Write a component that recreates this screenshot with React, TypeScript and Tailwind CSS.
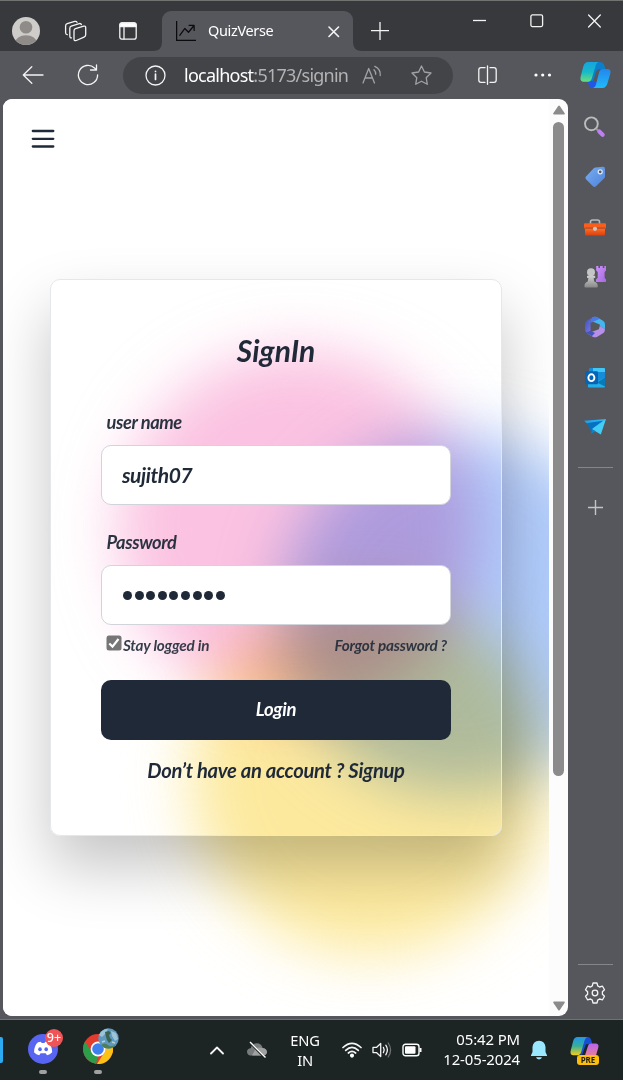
import React from "react";

const line = { fill: "none", stroke: "#f4f4f4", strokeWidth: 1.3, strokeLinecap: "round" as const, strokeLinejoin: "round" as const };

function TabStrip() {
  return (
    <div className="relative flex h-[51px] shrink-0 items-start border-t border-[#70736f] bg-[#38393c]">
      <svg className="ml-[12px] mt-[16px] shrink-0" width="28" height="28" viewBox="0 0 28 28">
        <clipPath id="avatar"><circle cx="14" cy="14" r="14" /></clipPath>
        <g clipPath="url(#avatar)">
          <rect width="28" height="28" fill="#cfcdca" />
          <circle cx="14" cy="10.3" r="6.3" fill="#8f8b88" />
          <ellipse cx="14" cy="26" rx="11" ry="7.8" fill="#8f8b88" />
        </g>
      </svg>
      <svg className="ml-[24px] mt-[19px] shrink-0" width="24" height="23" viewBox="0 0 24 23" {...line}>
        <path d="M11.5 8.7 19.7 6.2Q21.7 5.7 21.7 7.7V14.8Q21.7 16.5 20 17.2L12.3 20.5Q10 21.3 10 19V11Q10 9.2 11.5 8.7Z" />
        <path d="M7.5 17.8Q5.8 18 5.8 16V8.4Q5.8 6.6 7.3 6.1L15.2 3.6Q17 3.2 17.4 4.6" />
        <path d="M3.3 14.7Q1.6 14.6 1.6 12.8V6Q1.6 4.2 3.2 3.7L10.7 1.4Q12.4 1 13 2.3" />
      </svg>
      <svg className="ml-[31px] mt-[21px] shrink-0" width="18" height="18" viewBox="0 0 18 18" {...line}>
        <rect x="0.8" y="0.8" width="16.4" height="16.4" rx="2.3" />
        <path d="M1 3Q1 1 3 1H15Q17 1 17 3V4.7H1Z" fill="#fff" />
        <path d="M5 5V17" />
      </svg>
      <div className="relative ml-[25px] mt-[10px] flex h-[40px] w-[191px] shrink-0 rounded-t-[9px] bg-[#56575c]">
        <svg className="absolute -left-[9px] bottom-0" width="9" height="9"><path d="M9 0V9H0Q9 9 9 0Z" fill="#56575c" /></svg>
        <svg className="absolute -right-[9px] bottom-0" width="9" height="9"><path d="M0 0V9H9Q0 9 0 0Z" fill="#56575c" /></svg>
        <svg className="ml-[14px] mt-[10px] shrink-0" width="20" height="20" viewBox="0 0 16 16" fill="#0b0b0d">
          <path fillRule="evenodd" d="M0 0h1v15h15v1H0zm10 3.5a.5.5 0 0 1 .5-.5h4a.5.5 0 0 1 .5.5v4a.5.5 0 0 1-1 0V4.9l-3.613 4.417a.5.5 0 0 1-.74.037L7.06 6.767l-3.656 5.027a.5.5 0 0 1-.808-.588l4-5.5a.5.5 0 0 1 .758-.06l2.609 2.61L13.445 4H10.5a.5.5 0 0 1-.5-.5" />
        </svg>
        <span className="ml-[12px] mt-[9px] w-[70px] whitespace-nowrap text-[14.5px] leading-[20px] tracking-[-0.35px] text-white">QuizVerse</span>
        <svg className="ml-[50px] mt-[15px] shrink-0" width="12" height="12" {...line} strokeWidth="1.6"><path d="M1 1 10.5 10.5M10.5 1 1 10.5" /></svg>
      </div>
      <svg className="ml-[18px] mt-[21px] shrink-0" width="18" height="18" {...line} strokeLinecap="butt"><path d="M0 8.7H18M9 0V18" /></svg>
      <div className="ml-auto mr-[21px] mt-[13px] flex">
        <svg width="13" height="14" {...line} strokeLinecap="butt"><path d="M0 6.5H13" /></svg>
        <svg className="ml-[44px]" width="14" height="14" {...line}><rect x="0.9" y="0.9" width="11.7" height="11.7" rx="1.5" /></svg>
        <svg className="ml-[44px]" width="14" height="14" {...line}><path d="M.6 1 12.3 13M12.3 1 .6 13" /></svg>
      </div>
    </div>
  );
}

function CopilotMark() {
  return (
    <svg className="shrink-0" width="31" height="28" viewBox="0 0 31 28">
      <defs>
        <linearGradient id="cpA" x1="0" y1="0" x2="0" y2="1"><stop stopColor="#16a4df" /><stop offset=".5" stopColor="#14bac9" /><stop offset="1" stopColor="#6ddc7d" /></linearGradient>
        <linearGradient id="cpB" x1="0" y1="0" x2="0" y2="1"><stop stopColor="#2486ed" /><stop offset="1" stopColor="#20baf7" /></linearGradient>
      </defs>
      <path d="M7 1H19.5Q23 1 24.2 4L25.5 8H20Q17 8 16 11L13 20.5H7Z" fill="#0b7fcb" />
      <path d="M7.5 20.5H18L16 27H12Q10 27 9 24.5Z" fill="#2057e7" />
      <path d="M8.3 1H19Q16.8 1 15.5 5L12 17Q11 20.7 8 20.7H3.5Q-.5 20.7.7 15.5L3.3 5.5Q4.5 1 8.3 1Z" fill="url(#cpA)" />
      <path d="M22.5 8H27.5Q31.5 8 30.2 13L27.4 22.6Q26 27 22.5 27H12.5Q15 27 16.2 22.7L19 11.5Q20 8 22.5 8Z" fill="url(#cpB)" />
    </svg>
  );
}

function Toolbar() {
  return (
    <div className="flex h-[48px] shrink-0 items-center bg-[#56575c]">
      <svg className="ml-[22px] shrink-0" width="22" height="20" {...line}><path d="M21 10H1.5M9.8 1.8 1.3 10 9.8 18.2" /></svg>
      <svg className="ml-[33px] shrink-0" width="22" height="22" {...line}><path d="M20.6 11A9.6 9.6 0 1 1 17.5 3.9L19.5 6M19.5 1V6H13.5" /></svg>
      <div className="ml-[24px] flex h-[37px] w-[330px] shrink-0 items-center rounded-full bg-[#434448]">
        <svg className="ml-[22px] shrink-0" width="21" height="21" {...line}><circle cx="10.5" cy="10.5" r="9.5" /><path d="M10.5 9V14.5M10.5 6.3V6.5" strokeWidth="1.7" /></svg>
        <span className="ml-[18px] w-[165px] whitespace-nowrap text-[18px] leading-[24px] tracking-[-0.75px] text-[#b3b3b4]"><span className="text-white">localhost</span>:5173/signin</span>
        <svg className="ml-[13px] shrink-0" width="21" height="20" {...line} stroke="#a1a2a4"><path d="M1 18 6.7 3.5 12.5 18M3 13H10.5M12 4.7Q13.8 6.5 13.7 9.3M12.8 1.4Q19 4.5 18.2 10.5" /></svg>
        <svg className="ml-[28px] shrink-0" width="21" height="21" viewBox="0 0 21 21" {...line} stroke="#a1a2a4"><path d="M10.5 1 13.4 7 20 8 15.2 12.7 16.3 19.3 10.5 16.2 4.7 19.3 5.8 12.7 1 8 7.6 7Z" /></svg>
      </div>
      <svg className="ml-[25px] shrink-0" width="19" height="20" {...line}><path d="M7 2.7H3Q.8 2.7.8 5V15Q.8 17.3 3 17.3H7M12 2.7H16Q18.2 2.7 18.2 5V15Q18.2 17.3 16 17.3H12M9.5 .8V19.3" /></svg>
      <svg className="ml-[37px] shrink-0" width="18" height="4" fill="#fff"><circle cx="2" cy="2" r="1.6" /><circle cx="8.7" cy="2" r="1.6" /><circle cx="15.5" cy="2" r="1.6" /></svg>
      <div className="ml-[28px]"><CopilotMark /></div>
    </div>
  );
}

function Field({ label, children }: { label: string; children: React.ReactNode }) {
  return (
    <div className="flex flex-col">
      <span className="pl-[5.5px] text-[18.3px] font-bold italic leading-[24px] tracking-[-0.43px] text-[#1f2937]/95">{label}</span>
      <div className="mt-[11px] flex h-[60px] items-center rounded-[10px] border border-[#d1d5db] bg-white pl-[20px] text-[21px] font-bold italic tracking-[-0.4px]">{children}</div>
    </div>
  );
}

function SignInPage() {
  return (
    <div className="relative flex h-[917px] w-[546px] shrink-0 flex-col overflow-hidden bg-white font-['Lato',sans-serif] text-[#1f2937]">
      <div className="absolute left-[115px] top-[251px] size-[360px] rounded-full bg-[#f9a8d4] opacity-70 mix-blend-multiply blur-[30px]" />
      <div className="absolute left-[277px] top-[334px] size-[360px] rounded-full bg-[#8fb6f9] opacity-70 mix-blend-multiply blur-[30px]" />
      <div className="absolute left-[187px] top-[496px] size-[360px] rounded-full bg-[#fbe074] opacity-70 mix-blend-multiply blur-[30px]" />
      <svg className="relative ml-[28px] mt-[30px] shrink-0" width="24" height="20" stroke="#1f2937" strokeWidth="2.3" strokeLinecap="round"><path d="M1.8 2H22.3M1.8 9.8H22.3M1.8 17.5H22.3" /></svg>
      <div className="relative ml-[47px] mt-[130px] flex h-[557px] w-[452px] flex-col rounded-[10px] border border-[#e5e7eb] px-[50px] shadow-[0_31px_62px_rgba(0,0,0,0.23)]">
        <h1 className="mt-[50px] text-center text-[30px] font-bold italic leading-[40px]">SignIn</h1>
        <div className="mt-[40px]"><Field label="user name">sujith07</Field></div>
        <div className="mt-[25px]">
          <Field label="Password">
            <span className="ml-[1px] mt-[1px] flex gap-[2.6px]">
              {Array.from({ length: 9 }, (_, i) => <i key={i} className="size-[9px] rounded-full bg-[#1f2937]" />)}
            </span>
          </Field>
        </div>
        <div className="mt-[8px] flex h-[24px] items-center justify-between pl-[5px] pr-[4px] text-[15.3px] font-bold italic tracking-[-0.22px] text-[#1f2937]/90">
          <span className="flex items-center">
            <svg className="mb-[5px] mr-[1px]" width="16" height="16"><rect x=".5" y=".5" width="15" height="15" rx="2.5" fill="#767676" /><path d="M3.3 8.5 6.5 11.6 12.5 4" fill="none" stroke="#fff" strokeWidth="2.2" /></svg>
            <span>Stay logged in</span>
          </span>
          <span>Forgot password ?</span>
        </div>
        <div className="mt-[23px] flex h-[60px] items-center justify-center rounded-[10px] bg-[#1f2937] pb-[1px] text-[18.5px] font-bold italic tracking-[-0.3px] text-white">Login</div>
        <div className="mt-[16px] text-center text-[20.2px] font-bold italic leading-[28px] tracking-[-0.3px]">Don’t have an account ? Signup</div>
      </div>
    </div>
  );
}

function Sidebar() {
  return (
    <aside className="flex w-[55px] shrink-0 flex-col items-center bg-[#56575c] pr-px">
      <svg width="0" height="0" className="absolute">
        <defs>
          <linearGradient id="sBlue" x1="0" y1="0" x2="1" y2="1"><stop stopColor="#7aaeef" /><stop offset="1" stopColor="#4d82dc" /></linearGradient>
          <linearGradient id="sOrange" x1="0" y1="0" x2="0" y2="1"><stop stopColor="#fb6f25" /><stop offset="1" stopColor="#dd3e0d" /></linearGradient>
          <linearGradient id="sGrey" x1="0" y1="0" x2="0" y2="1"><stop stopColor="#cfcfcf" /><stop offset="1" stopColor="#898989" /></linearGradient>
          <linearGradient id="sPurple" x1="0" y1="0" x2="1" y2="1"><stop stopColor="#ce91fd" /><stop offset="1" stopColor="#a56ae0" /></linearGradient>
          <linearGradient id="sCyan" x1="0" y1="0" x2="1" y2="1"><stop stopColor="#1598e6" /><stop offset="1" stopColor="#4cd8fb" /></linearGradient>
          <linearGradient id="sIndigo" x1="0" y1="0" x2="1" y2="1"><stop stopColor="#3754ba" /><stop offset="1" stopColor="#8a78ed" /></linearGradient>
        </defs>
      </svg>
      <div className="mt-[3px] flex flex-col [&>svg]:my-[14px] [&>svg]:size-[22px]">
        <svg viewBox="0 0 22 22"><circle cx="7.4" cy="7.8" r="6.4" fill="none" stroke="#bcbcbc" strokeWidth="1.9" /><path d="M12.3 12.7 14 14.4" stroke="#999" strokeWidth="2" /><path d="M15.3 15.5 18.6 18.7" stroke="#bd80ee" strokeWidth="4.2" strokeLinecap="round" /></svg>
        <svg viewBox="0 0 22 22"><path d="M11.5 1.4 19 .8Q21 .8 21 3V10.5Q21 11.5 20 12.5L12 20.3Q10.5 21.5 9 20.2L2 13.2Q.7 11.8 2 10.5L10 2Q10.8 1.5 11.5 1.4Z" fill="url(#sBlue)" /><circle cx="16.2" cy="5.8" r="2" fill="#56575c" stroke="#d9e7fb" strokeWidth="1.3" /></svg>
        <svg viewBox="0 -1 22 22"><path d="M6.5 7V4.7Q6.5 3 8.5 3H13.5Q15.5 3 15.5 4.7V7" fill="none" stroke="#b9b9b9" strokeWidth="1.6" /><path d="M0 7Q0 6.3 1 6.3H21Q22 6.3 22 7V11.5H0Z" fill="#f95f1b" /><path d="M1 11.5H21V17Q21 18.5 19.5 18.5H2.5Q1 18.5 1 17Z" fill="url(#sOrange)" /><path d="M.5 11H21.5" stroke="#b93a14" strokeWidth=".8" /><circle cx="11" cy="11.8" r="2.1" fill="#c8c8c8" /></svg>
        <svg viewBox="0 0 22 22"><path d="M12.2 0H14.4V2H16V0H18.8V2H20.3V0H22V4.4L20.6 6V11.8L22 13.5V16H12V13.5L13.7 11.8V6L12.2 4.4Z" fill="url(#sPurple)" /><circle cx="7" cy="6.2" r="4" fill="#c5c5c5" /><path d="M3 9.7H11.2V12H9.7L10.2 15.4Q13.7 16.8 13.7 19.5V20.5Q13.7 21.5 12.7 21.5H1.5Q.5 21.5.5 20.5V19.5Q.5 16.8 3.7 15.4L4.4 12H3Z" fill="url(#sGrey)" /></svg>
        <svg viewBox="0 0 22 22"><path d="M8.5 1.3Q11 .2 13.5 1.5L19 4.7Q21 6 21 8.5V13L15.8 10V8.6L8.5 5.6Z" fill="#41b7ee" /><path d="M8.8 1.2Q5.8 3.3 6.5 7.8V15L2.4 16.8Q1 15.5 1 13V8Q1 5.8 2.8 4.7Z" fill="url(#sIndigo)" /><path d="M8.8 1.2Q6 3.3 6.3 7L15.8 2.8 13.4 1.4Q11 .1 8.8 1.2Z" fill="#4c77e4" /><path d="M3.2 17.4 14.8 13.3 15.8 10 21 13Q21 16 19 17.3L13.3 20.7Q11 22 8.7 20.7Z" fill="#b78ee8" /><path d="M2.4 16.8 6.5 14.7 11 17.1 7.8 20.2Z" fill="#4355bd" /></svg>
        <svg viewBox="0 -1 22 22"><rect x="5" y="1" width="16" height="16" rx="1.2" fill="#168bd7" /><path d="M9 1H20Q21 1 21 2V5H9Z" fill="#40c5f7" /><path d="M4 20V14L12 15 21 10.5V19.5Q21 20.5 20 20.5H4.8Z" fill="#25afe9" /><path d="M13 15.5 21 10.5V19.5Z" fill="#087ab9" /><rect x="1" y="4.2" width="13" height="13" rx="1.2" fill="#0763b3" /><ellipse cx="7.4" cy="10.7" rx="3" ry="3.4" fill="none" stroke="#fff" strokeWidth="1.9" /></svg>
        <svg viewBox="0 0 22 22"><path d="M0 4.7 22 3 9 13.3 5.5 9.6Z" fill="url(#sCyan)" /><path d="M3 7 19 4.7 8 13V17L4.8 11Z" fill="#0870c1" /><path d="M22 3 16.8 18.4 8 13.2Z" fill="#42cdf8" /><path d="M8 13.2 11.5 15.1 7 18Z" fill="#0d83cb" /></svg>
      </div>
      <div className="mt-[15px] h-px w-[35px] bg-[#85868a]" />
      <svg className="mt-[32px] shrink-0" width="15" height="15"><path d="M0 7.5H15M7.5 0V15" stroke="#c4c4c6" strokeWidth="1.4" /></svg>
      <div className="mt-auto h-px w-[35px] bg-[#85868a]" />
      <svg className="mb-[15px] mt-[17px] shrink-0" width="22" height="22" viewBox="0 0 22 22" {...line}>
        <path d="M9 1H13L13.7 3.9 15.5 5 18.5 4.2 20.5 7.7 18.4 9.8V12.2L20.5 14.3 18.5 17.8 15.5 17 13.7 18.1 13 21H9L8.3 18.1 6.5 17 3.5 17.8 1.5 14.3 3.6 12.2V9.8L1.5 7.7 3.5 4.2 6.5 5 8.3 3.9Z" /><circle cx="11" cy="11" r="2.8" />
      </svg>
    </aside>
  );
}

function Taskbar() {
  return (
    <div className="flex h-[61px] shrink-0 items-center border-t border-[#707372] bg-[#1d2424] text-white">
      <div className="mb-[1px] h-[26px] w-[3px] rounded-r-[2px] bg-[#2cabf3]" />
      <div className="relative ml-[25px] flex h-full w-[30px] flex-col items-center pt-[14px]">
        <svg className="shrink-0" width="30" height="30"><circle cx="15" cy="15" r="15" fill="#5865f2" /><path d="M10 8.3 13 7.8 13.6 9H16.5L17.2 7.8 20.3 8.3Q23.8 11 24.2 18.2 22 20.5 19 21.2L17.7 19.3H12.6L11.2 21.2Q8.2 20.5 6 18.2 6.2 11.5 10 8.3Z" fill="#fff" /><ellipse cx="12" cy="15.2" rx="1.8" ry="2" fill="#5865f2" /><ellipse cx="18.2" cy="15.2" rx="1.8" ry="2" fill="#5865f2" /></svg>
        <span className="absolute left-[17px] top-[9px] flex size-[18px] items-center justify-center rounded-full bg-[#ef5557] text-[12.5px] font-medium leading-none">9+</span>
        <i className="mt-[6px] h-[4px] w-[8px] rounded-full bg-[#a0a2a2]" />
      </div>
      <div className="relative ml-[25px] flex h-full w-[30px] flex-col items-center pt-[14px]">
        <svg className="shrink-0" width="30" height="30"><circle cx="15" cy="15" r="15" fill="#e33b2e" /><path d="M2 7.5 9.3 19 15 22 13 29.8A15 15 0 0 1 2 7.5Z" fill="#2b9d4b" /><path d="M15 8H28.3A15 15 0 0 1 14 30L21.5 18Z" fill="#fbc116" /><circle cx="15" cy="15" r="7.4" fill="#fff" /><circle cx="15" cy="15" r="5.8" fill="#3d7fef" /></svg>
        <svg className="absolute left-[15px] top-[8px]" width="21" height="21">
          <circle cx="10.5" cy="10.5" r="10.2" fill="#5f99c0" />
          <path d="M1 7Q4 1 10 .8L8 5 4 9ZM13 3 18 5 20 11 17 13 14 8Z" fill="#9cc4d8" />
          <path d="M7 4 11 3 13 5 11 7 12 10 14 12 11 15 9 12 8 9Z" fill="#3b6350" />
          <path d="M3 17Q7 14 10 17T18 16Q15 20.5 10.5 20.5T3 17Z" fill="#4d7f5b" />
          <path d="M4 14 7 13M14 14 17 15" stroke="#b7d2d8" strokeWidth="1.5" />
        </svg>
        <i className="mt-[6px] h-[4px] w-[8px] rounded-full bg-[#a0a2a2]" />
      </div>
      <svg className="ml-[97px] shrink-0" width="14" height="9" {...line} strokeWidth="1.8"><path d="M1 7.5 7 1.5 13 7.5" /></svg>
      <svg className="ml-[22px] shrink-0" width="22" height="18"><path d="M4 14.5Q1 13.5 1 10.7 1.2 7.7 4.8 7.3 5.8 2.5 10.8 2.3 15.5 2.5 16.7 7 20.5 7.3 21 11 20.7 14 17.5 14.5Z" fill="#777b7b" /><path d="M10 7Q13 5.8 16.5 7 20.5 7.5 21 11 20.5 14 17.5 14.5H6Z" fill="#a0a1a1" /><path d="M3.4 .6 19 16.9" stroke="#1d2424" strokeWidth="2.4" /><path d="M4 1 19.5 16.5" stroke="#fff" strokeWidth="1.4" /></svg>
      <div className="ml-[19px] w-[36px] text-center text-[14.7px] leading-[20px] tracking-[-0.2px]">ENG<br />IN</div>
      <svg className="ml-[19px] shrink-0" width="20" height="16" {...line} strokeWidth="1.7"><path d="M1 5.5Q10-2.8 19 5.5M3.7 8.3Q10 2.5 16.3 8.3M6.4 11Q10 7.8 13.6 11" /><circle cx="10" cy="13.6" r="1.2" fill="#fff" stroke="#fff" /></svg>
      <svg className="ml-[10px] shrink-0" width="20" height="18" {...line}><path d="M1 6.4H4.4L8.7 2.5V15.5L4.4 11.6H1ZM11.4 6.4Q13 9 11.4 11.6M13.8 4.2Q17 9 13.8 13.8" /><path d="M16.2 2Q21 9 16.2 16" stroke="#6b7070" /></svg>
      <svg className="ml-[10px] shrink-0" width="21" height="14"><rect x="1" y="1.2" width="16" height="11.6" rx="2.5" fill="none" stroke="#fff" strokeWidth="1.4" /><rect x="3" y="3.2" width="10.5" height="7.6" rx="1" fill="#fff" /><path d="M18.5 5V9" stroke="#fff" strokeWidth="2" /></svg>
      <div className="-mt-[2px] ml-auto w-[90px] whitespace-nowrap text-right text-[14.9px] leading-[20px] tracking-[-0.1px]">05:42 PM<br />12-05-2024</div>
      <svg className="ml-[10px] shrink-0" width="18" height="20"><path d="M9 .7Q15 1 15.5 7V12L17 15.2V16H1V15.2L2.5 12V7Q3 1 9 .7ZM6 17.3H12Q11.5 19.4 9 19.4T6 17.3Z" fill="#99e8ff" /></svg>
      <div className="relative ml-[22px] mr-[23px] h-[29px] w-[30px]">
        <svg className="absolute left-0 top-0" width="29" height="26" viewBox="0 0 31 28">
          <defs><linearGradient id="tA" x1="0" y1="0" x2="0" y2="1"><stop stopColor="#2395ee" /><stop offset=".5" stopColor="#36af99" /><stop offset="1" stopColor="#f7cf17" /></linearGradient><linearGradient id="tB" x1="0" y1="0" x2="0" y2="1"><stop stopColor="#b863f5" /><stop offset="1" stopColor="#f48380" /></linearGradient></defs>
          <path d="M8 1H19Q22 1 23 5L24 9H17L13 20H7Z" fill="#174ed2" /><path d="M8 1H19Q17 1 15.5 5L12 17Q11 20.7 8 20.7H3.5Q-.5 20.7.7 15.5L3.3 5.5Q4.5 1 8 1Z" fill="url(#tA)" /><path d="M22.5 8H27.5Q31.5 8 30.2 13L27 24H15L19 11.5Q20 8 22.5 8Z" fill="url(#tB)" />
        </svg>
        <span className="absolute bottom-0 left-[7px] flex h-[10px] w-[22px] items-center justify-center rounded-[3px] bg-[#fcbe0b] text-[8px] font-bold leading-none text-[#1e1c10]">PRE</span>
      </div>
    </div>
  );
}

export default function App() {
  return (
    <div className="flex h-[1080px] w-[623px] flex-col overflow-hidden bg-[#56575c] font-['Noto_Sans',sans-serif]">
      <TabStrip />
      <Toolbar />
      <div className="flex min-h-0 flex-1">
        <div className="ml-[3px] flex h-[917px] w-[565px] shrink-0 overflow-hidden rounded-[9px] bg-[#fcfcfc]">
          <SignInPage />
          <div className="flex w-[19px] flex-col items-center">
            <svg className="mt-[6px] shrink-0" width="12" height="10"><path d="M5.2 1Q6 0 6.8 1L11.7 8.2Q12 9.5 11 9.5H1Q0 9.5.3 8.2Z" fill="#8b8b8b" /></svg>
            <div className="mt-[7px] h-[654px] w-[11px] rounded-full bg-[#8b8b8b]" />
            <svg className="mb-[5px] mt-auto shrink-0" width="12" height="10"><path d="M5.2 9Q6 10 6.8 9L11.7 1.8Q12 .5 11 .5H1Q0 .5.3 1.8Z" fill="#8b8b8b" /></svg>
          </div>
        </div>
        <Sidebar />
      </div>
      <Taskbar />
    </div>
  );
}
